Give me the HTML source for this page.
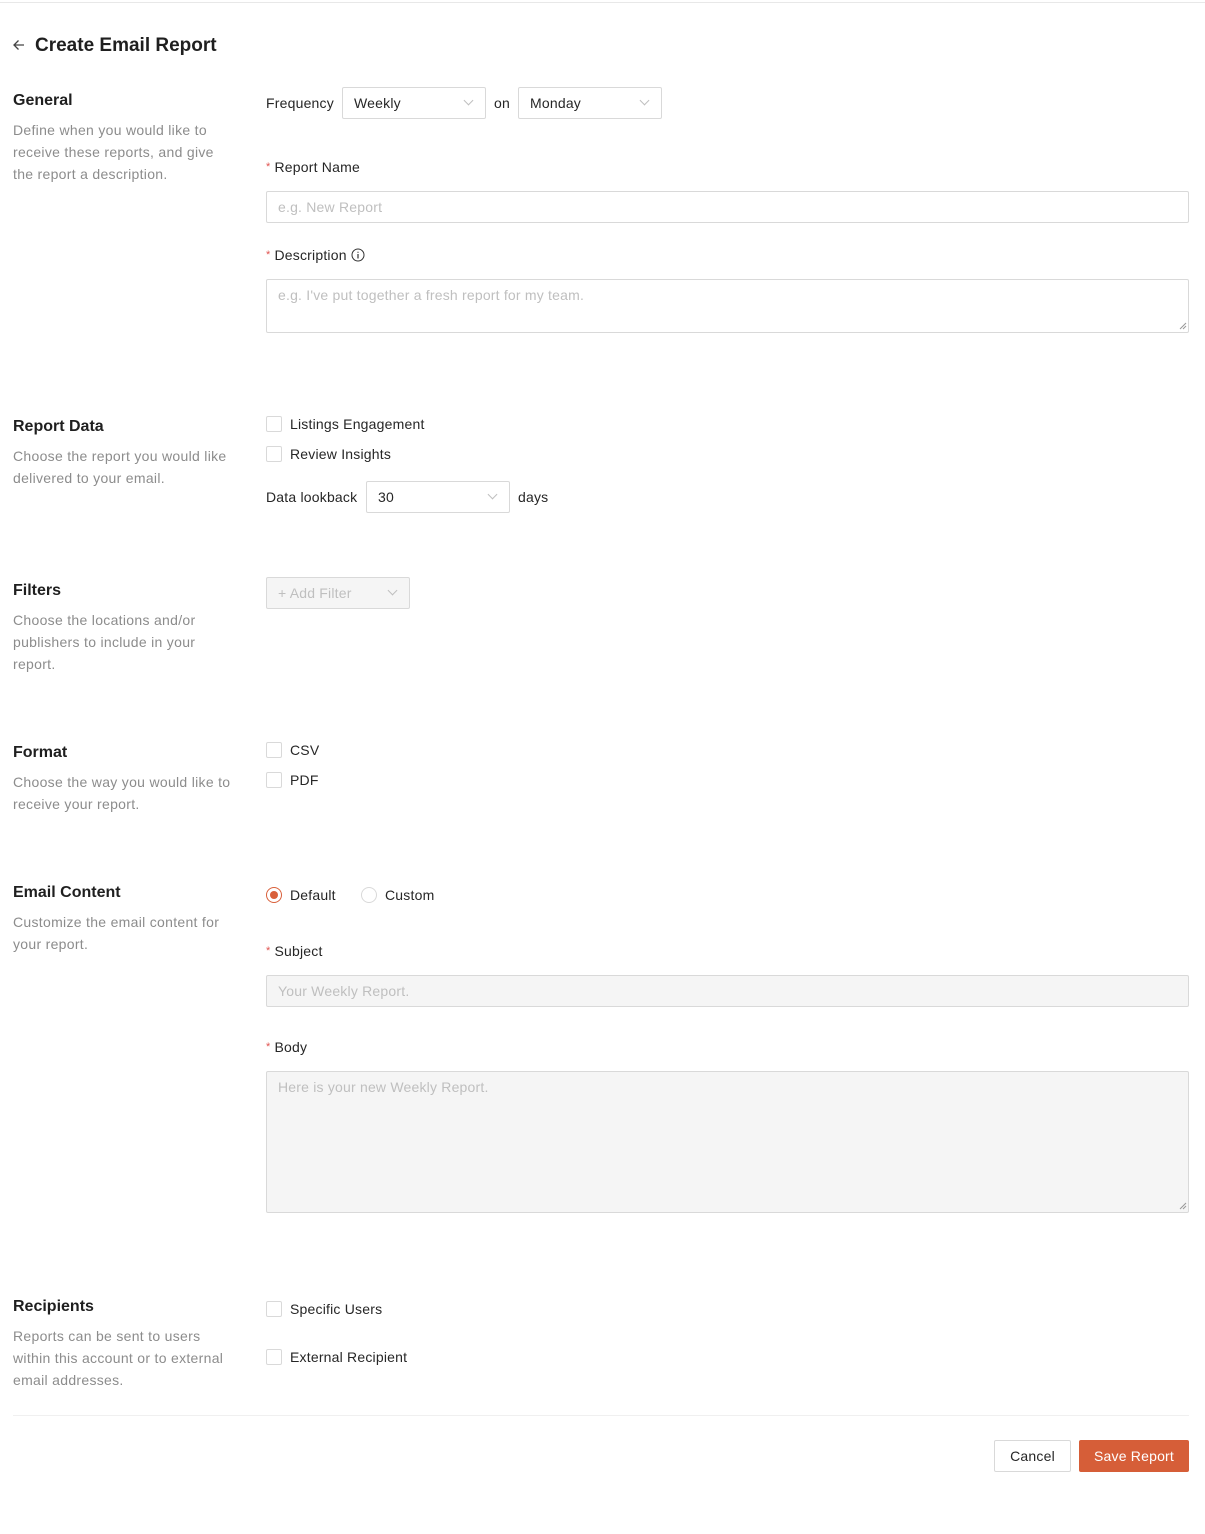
<!DOCTYPE html>
<html><head><meta charset="utf-8"><style>
*{box-sizing:border-box;margin:0;padding:0}
body{width:1205px;height:1534px;background:#fff;font-family:"Liberation Sans",sans-serif;font-size:14px;color:#262626;position:relative;overflow:hidden;letter-spacing:0.2px}
.a{position:absolute;white-space:nowrap;line-height:22px}
.h{font-size:16px;font-weight:bold;color:#1f1f1f;letter-spacing:0}
.d{color:#8c8c8c;line-height:22px;white-space:normal;letter-spacing:0.3px}
.box{position:absolute;border:1px solid #d9d9d9;background:#fff;border-radius:2px}
.ph{color:#bfbfbf}
.cb{position:absolute;width:16px;height:16px;border:1px solid #d9d9d9;border-radius:2px;background:#fff}
.star{color:#e0524f;font-size:11px;margin-right:4px;vertical-align:top}
.chev{position:absolute;width:7px;height:7px;border-right:1px solid #bfbfbf;border-bottom:1px solid #bfbfbf;transform:rotate(45deg)}
.dis{background:#f5f5f5}
</style></head><body>
<div style="position:absolute;top:2px;left:0;width:1205px;height:1px;background:#e8e8e8"></div>
<svg class="a" style="left:12px;top:38px" width="14" height="14" viewBox="0 0 14 14"><path d="M12 7H2M6.5 2.5L2 7l4.5 4.5" stroke="#444" stroke-width="1.3" fill="none"/></svg>
<div class="a" style="left:35px;top:33px;font-size:19px;line-height:26px;font-weight:bold;color:#1f1f1f;letter-spacing:0">Create Email Report</div>

<!-- General -->
<div class="a h" style="left:13px;top:90px">General</div>
<div class="a d" style="left:13px;top:119px;width:215px">Define when you would like to receive these reports, and give the report a description.</div>
<div class="a" style="left:266px;top:92px">Frequency</div>
<div class="box" style="left:342px;top:87px;width:144px;height:32px"></div>
<div class="a" style="left:354px;top:92px">Weekly</div>
<div class="chev" style="left:465px;top:97px"></div>
<div class="a" style="left:494px;top:92px">on</div>
<div class="box" style="left:518px;top:87px;width:144px;height:32px"></div>
<div class="a" style="left:530px;top:92px">Monday</div>
<div class="chev" style="left:641px;top:97px"></div>
<div class="a" style="left:266px;top:156px"><span class="star">*</span>Report Name</div>
<div class="box" style="left:266px;top:191px;width:923px;height:32px"></div>
<div class="a ph" style="left:278px;top:196px">e.g. New Report</div>
<div class="a" style="left:266px;top:244px"><span class="star">*</span>Description <svg width="14" height="14" viewBox="0 0 14 14" style="vertical-align:-2px"><circle cx="7" cy="7" r="6" stroke="#333" fill="none"/><path d="M7 6v4.5M7 3.8v1" stroke="#333" stroke-width="1.2"/></svg></div>
<div class="box" style="left:266px;top:279px;width:923px;height:54px"></div>
<div class="a ph" style="left:278px;top:284px">e.g. I've put together a fresh report for my team.</div>
<svg class="a" style="left:1179px;top:322px" width="8" height="8"><path d="M1 7L7 1M4 7L7 4" stroke="#999"/></svg>

<!-- Report Data -->
<div class="a h" style="left:13px;top:416px">Report Data</div>
<div class="a d" style="left:13px;top:445px;width:225px">Choose the report you would like delivered to your email.</div>
<div class="cb" style="left:266px;top:416px"></div><div class="a" style="left:290px;top:413px">Listings Engagement</div>
<div class="cb" style="left:266px;top:446px"></div><div class="a" style="left:290px;top:443px">Review Insights</div>
<div class="a" style="left:266px;top:486px">Data lookback</div>
<div class="box" style="left:366px;top:481px;width:144px;height:32px"></div>
<div class="a" style="left:378px;top:486px">30</div>
<div class="chev" style="left:489px;top:491px"></div>
<div class="a" style="left:518px;top:486px">days</div>

<!-- Filters -->
<div class="a h" style="left:13px;top:580px">Filters</div>
<div class="a d" style="left:13px;top:609px;width:200px">Choose the locations and/or publishers to include in your report.</div>
<div class="box dis" style="left:266px;top:577px;width:144px;height:32px"></div>
<div class="a ph" style="left:278px;top:582px">+ Add Filter</div>
<div class="chev" style="left:389px;top:587px"></div>

<!-- Format -->
<div class="a h" style="left:13px;top:742px">Format</div>
<div class="a d" style="left:13px;top:771px;width:225px">Choose the way you would like to receive your report.</div>
<div class="cb" style="left:266px;top:742px"></div><div class="a" style="left:290px;top:739px">CSV</div>
<div class="cb" style="left:266px;top:772px"></div><div class="a" style="left:290px;top:769px">PDF</div>

<!-- Email Content -->
<div class="a h" style="left:13px;top:882px">Email Content</div>
<div class="a d" style="left:13px;top:911px;width:225px">Customize the email content for your report.</div>
<div style="position:absolute;left:266px;top:887px;width:16px;height:16px;border:1px solid #d9603b;border-radius:50%"><div style="position:absolute;left:3px;top:3px;width:8px;height:8px;border-radius:50%;background:#d9603b"></div></div>
<div class="a" style="left:290px;top:884px">Default</div>
<div style="position:absolute;left:361px;top:887px;width:16px;height:16px;border:1px solid #d9d9d9;border-radius:50%"></div>
<div class="a" style="left:385px;top:884px">Custom</div>
<div class="a" style="left:266px;top:940px"><span class="star">*</span>Subject</div>
<div class="box dis" style="left:266px;top:975px;width:923px;height:32px"></div>
<div class="a ph" style="left:278px;top:980px">Your Weekly Report.</div>
<div class="a" style="left:266px;top:1036px"><span class="star">*</span>Body</div>
<div class="box dis" style="left:266px;top:1071px;width:923px;height:142px"></div>
<div class="a ph" style="left:278px;top:1076px">Here is your new Weekly Report.</div>
<svg class="a" style="left:1179px;top:1202px" width="8" height="8"><path d="M1 7L7 1M4 7L7 4" stroke="#999"/></svg>

<!-- Recipients -->
<div class="a h" style="left:13px;top:1296px">Recipients</div>
<div class="a d" style="left:13px;top:1325px;width:215px">Reports can be sent to users within this account or to external email addresses.</div>
<div class="cb" style="left:266px;top:1301px"></div><div class="a" style="left:290px;top:1298px">Specific Users</div>
<div class="cb" style="left:266px;top:1349px"></div><div class="a" style="left:290px;top:1346px">External Recipient</div>

<div style="position:absolute;top:1415px;left:13px;width:1176px;height:1px;background:#f0f0f0"></div>
<div class="box" style="left:994px;top:1440px;width:77px;height:32px;text-align:center;line-height:30px">Cancel</div>
<div style="position:absolute;left:1079px;top:1440px;width:110px;height:32px;background:#d65e38;border-radius:2px;color:#fff;text-align:center;line-height:32px">Save Report</div>
</body></html>
